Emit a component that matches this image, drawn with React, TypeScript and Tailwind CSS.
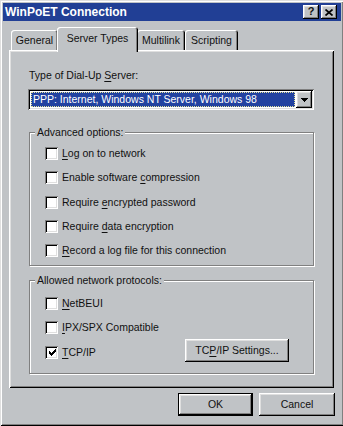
import React from "react";

function U({ children }: { children: React.ReactNode }) {
  return <span className="underline decoration-1 underline-offset-[2px]">{children}</span>;
}

function Check({ checked }: { checked?: boolean }) {
  return (
    <div className="w-[13px] h-[13px] shrink-0 bg-white flex items-center justify-center shadow-[inset_1px_1px_0_#808080,inset_-1px_-1px_0_#ffffff,inset_2px_2px_0_#000000,inset_-2px_-2px_0_#dfdfdf]">
      {checked && (
        <svg width="7" height="7" viewBox="0 0 7 7" className="ml-[1px] mt-[1px]" shapeRendering="crispEdges">
          <rect x="6" y="0" width="1" height="3" fill="#000" />
          <rect x="5" y="1" width="1" height="3" fill="#000" />
          <rect x="4" y="2" width="1" height="3" fill="#000" />
          <rect x="3" y="3" width="1" height="3" fill="#000" />
          <rect x="2" y="4" width="1" height="3" fill="#000" />
          <rect x="1" y="3" width="1" height="3" fill="#000" />
          <rect x="0" y="2" width="1" height="3" fill="#000" />
        </svg>
      )}
    </div>
  );
}

function Row({ h, checked, children }: { h: string; checked?: boolean; children: React.ReactNode }) {
  return (
    <div className={`${h} flex items-center pl-[15px] gap-[4px]`}>
      <Check checked={checked} />
      <span>{children}</span>
    </div>
  );
}

const raised =
  "shadow-[inset_-1px_-1px_0_#000000,inset_1px_1px_0_#ffffff,inset_-2px_-2px_0_#808080,inset_2px_2px_0_#dfdfdf]";

export default function App() {
  return (
    <div className="w-[343px] h-[426px] overflow-hidden bg-[#c0c3c6] font-['Liberation_Sans',Arial,sans-serif] text-[10.5px] leading-[13px] text-[#111111]">
      <div className="w-[344px] h-[426px] p-[3px] flex flex-col shadow-[inset_1px_1px_0_#dfdfdf,inset_-1px_-1px_0_#000000,inset_2px_2px_0_#ffffff,inset_-2px_-2px_0_#808080]">
        {/* Title bar */}
        <div className="h-[18px] shrink-0 bg-[#213f95] flex items-center pl-[2px] pr-[4px]">
          <span className="text-white font-bold text-[12px] leading-[14px]">WinPoET Connection</span>
          <div className="ml-auto flex gap-[2px]">
            <div className={`w-[16px] h-[14px] bg-[#c0c3c6] ${raised} flex items-center justify-center font-bold text-[11px] leading-[11px] pb-[1px]`}>
              ?
            </div>
            <div className={`w-[16px] h-[14px] bg-[#c0c3c6] ${raised} flex items-center justify-center`}>
              <svg width="8" height="7" viewBox="0 0 8 7">
                <path d="M0.5 0.5 L7.5 6.5 M7.5 0.5 L0.5 6.5" stroke="#000" strokeWidth="1.7" />
              </svg>
            </div>
          </div>
        </div>

        {/* Client area */}
        <div className="flex flex-col pl-[6px] pt-[6px]">
          {/* Tabs */}
          <div className="h-[23px] flex items-end">
            <div className="ml-[2px] w-[47px] h-[20px] rounded-t-[3px] flex items-center justify-center shadow-[inset_1px_1px_0_#ffffff,inset_-1px_0_0_#000000,inset_-2px_0_0_#808080]">
              General
            </div>
            <div className="relative z-10 -ml-[1px] -mr-[1px] -mb-[2px] w-[81px] h-[25px] pb-[2px] rounded-t-[3px] bg-[#c0c3c6] flex items-center justify-center shadow-[inset_1px_1px_0_#ffffff,inset_-1px_0_0_#000000,inset_-2px_0_0_#808080]">
              Server Types
            </div>
            <div className="w-[48px] h-[20px] rounded-t-[3px] flex items-center justify-center shadow-[inset_1px_1px_0_#ffffff,inset_-1px_0_0_#000000,inset_-2px_0_0_#808080]">
              Multilink
            </div>
            <div className="w-[53px] h-[20px] rounded-t-[3px] flex items-center justify-center shadow-[inset_1px_1px_0_#ffffff,inset_-1px_0_0_#000000,inset_-2px_0_0_#808080]">
              Scripting
            </div>
          </div>

          {/* Panel */}
          <div className="w-[325px] h-[338px] flex flex-col pt-[19px] pl-[19px] pr-[20px] shadow-[inset_1px_1px_0_#ffffff,inset_-1px_-1px_0_#000000,inset_2px_2px_0_#dfdfdf,inset_-2px_-2px_0_#808080]">
            <div className="pl-[1px]">
              Type of Dial-Up <U>S</U>erver:
            </div>

            {/* Combo */}
            <div className="mt-[7px] h-[21px] w-full bg-white flex p-[2px] shadow-[inset_1px_1px_0_#808080,inset_-1px_-1px_0_#ffffff,inset_2px_2px_0_#000000,inset_-2px_-2px_0_#dfdfdf]">
              <div className="flex-1 m-[1px] bg-[#2242a0] border border-dotted border-[#e2e29a] text-white flex items-center pl-[1px] whitespace-nowrap">
                PPP: Internet, Windows NT Server, Windows 98
              </div>
              <div className={`w-[16px] h-[17px] bg-[#c0c3c6] ${raised} flex items-center justify-center`}>
                <svg width="7" height="4" viewBox="0 0 7 4" shapeRendering="crispEdges">
                  <path d="M0 0 H7 L3.5 4 Z" fill="#000" />
                </svg>
              </div>
            </div>

            {/* Advanced options */}
            <div className="mt-[22px] ml-[1px] w-[285px] flex flex-col border border-[#808080] shadow-[inset_1px_1px_0_#ffffff,1px_1px_0_#ffffff] pb-[2px]">
              <div className="-mt-[7px] ml-[5px] self-start bg-[#c0c3c6] px-[2px]">Advanced options:</div>
              <div className="mt-[2px] flex flex-col">
                <Row h="h-[24px]">
                  <U>L</U>og on to network
                </Row>
                <Row h="h-[25px]">
                  Enable software <U>c</U>ompression
                </Row>
                <Row h="h-[24px]">
                  Require <U>e</U>ncrypted password
                </Row>
                <Row h="h-[24px]">
                  Require <U>d</U>ata encryption
                </Row>
                <Row h="h-[25px]">
                  <U>R</U>ecord a log file for this connection
                </Row>
              </div>
            </div>

            {/* Allowed network protocols */}
            <div className="mt-[14px] ml-[1px] w-[285px] flex flex-col border border-[#808080] shadow-[inset_1px_1px_0_#ffffff,1px_1px_0_#ffffff] pb-[9px]">
              <div className="-mt-[7px] ml-[5px] self-start bg-[#c0c3c6] px-[2px]">Allowed network protocols:</div>
              <div className="mt-[4px] flex flex-col">
                <Row h="h-[24px]">
                  <U>N</U>etBEUI
                </Row>
                <Row h="h-[25px]">
                  <U>I</U>PX/SPX Compatible
                </Row>
                <div className="h-[24px] flex items-center pl-[15px] pr-[24px] gap-[4px]">
                  <Check checked />
                  <span>
                    <U>T</U>CP/IP
                  </span>
                  <div className={`ml-auto -mt-[3px] w-[104px] h-[23px] ${raised} flex items-center justify-center`}>
                    <span>
                      TC<U>P</U>/IP Settings...
                    </span>
                  </div>
                </div>
              </div>
            </div>
          </div>

          {/* Bottom buttons */}
          <div className="mt-[5px] w-[326px] flex justify-end gap-[6px]">
            <div className={`w-[75px] h-[23px] border border-black ${raised} flex items-center justify-center`}>
              OK
            </div>
            <div className={`w-[76px] h-[23px] ${raised} flex items-center justify-center`}>Cancel</div>
          </div>
        </div>
      </div>
    </div>
  );
}
